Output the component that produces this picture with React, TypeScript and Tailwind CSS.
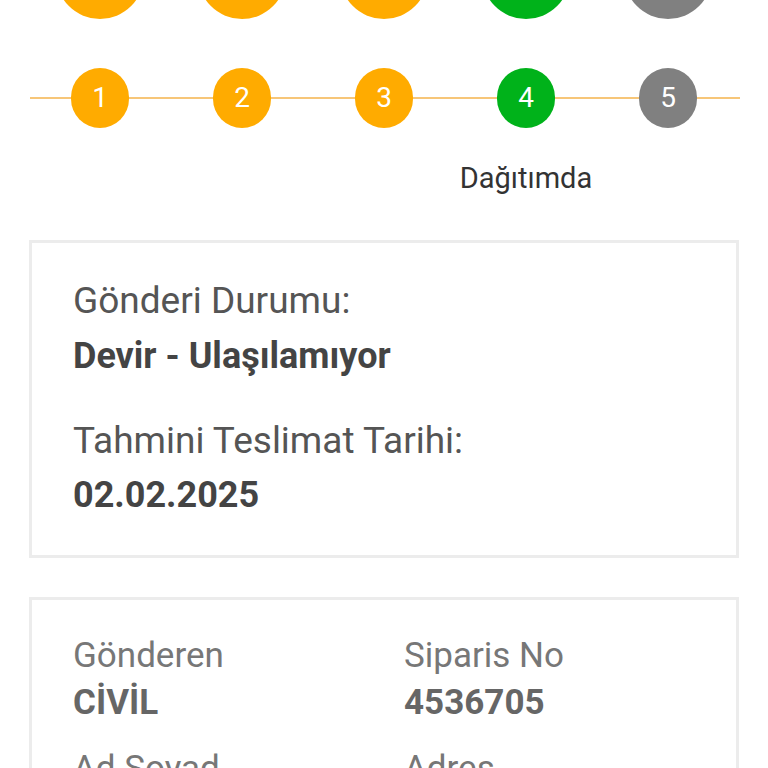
import React from "react";

const steps = [
  { n: "1", c: "bg-[#ffab00]" },
  { n: "2", c: "bg-[#ffab00]" },
  { n: "3", c: "bg-[#ffab00]" },
  { n: "4", c: "bg-[#00b21a]" },
  { n: "5", c: "bg-[#808080]" },
];

export default function App() {
  return (
    <div className="w-[768px] h-[768px] overflow-hidden bg-white" style={{ fontFamily: "Roboto, 'Noto Sans', sans-serif" }}>
      {/* top partially visible circles */}
      <div className="flex pl-[29px] mt-[-69px]">
        {steps.map((s) => (
          <div key={"t" + s.n} className="w-[142px] flex justify-center">
            <div className={`w-[88px] h-[88px] rounded-full ${s.c}`} />
          </div>
        ))}
      </div>
      {/* stepper */}
      <div className="relative ml-[30px] w-[710px] mt-[49px] h-[60px]">
        <div className="absolute left-0 right-0 top-[29px] h-[2px] bg-[#f7c678]" />
        <div className="relative flex ml-[-1px]">
          {steps.map((s) => (
            <div key={s.n} className="w-[142px] flex justify-center">
              <div className={`w-[58px] h-[60px] rounded-full ${s.c} flex items-center justify-center text-white text-[28px]`}>
                {s.n}
              </div>
            </div>
          ))}
        </div>
      </div>
      <div className="flex pl-[29px] mt-[32px]">
        <div className="w-[426px]" />
        <div className="w-[142px] flex justify-center whitespace-nowrap text-[29px] leading-[36px] text-[#333]">Dağıtımda</div>
      </div>
      {/* card 1 */}
      <div className="mx-[29px] mt-[44px] border-[3px] border-[#ececec] pl-[41px] pt-[36px] pb-[38px]">
        <div className="text-[37px] leading-[44px] text-[#555]">Gönderi Durumu:</div>
        <div className="mt-[11px] text-[36px] leading-[44px] font-bold text-[#444]">Devir - Ulaşılamıyor</div>
        <div className="mt-[41px] text-[37px] leading-[44px] text-[#555]">Tahmini Teslimat Tarihi:</div>
        <div className="mt-[10px] text-[36px] leading-[44px] font-bold text-[#444]">02.02.2025</div>
      </div>
      {/* card 2 */}
      <div className="mx-[29px] mt-[39px] border-[3px] border-[#ececec] pl-[41px] pt-[34px] pb-[37px]">
        <div className="grid grid-cols-[331px_1fr]">
          <div>
            <div className="text-[35px] leading-[44px] text-[#777]">Gönderen</div>
            <div className="mt-[3px] text-[35px] leading-[44px] font-bold text-[#666]">CİVİL</div>
          </div>
          <div>
            <div className="text-[35px] leading-[44px] text-[#777]">Siparis No</div>
            <div className="mt-[3px] text-[35px] leading-[44px] font-bold text-[#666]">4536705</div>
          </div>
          <div className="mt-[22px]">
            <div className="text-[35px] leading-[44px] text-[#777]">Ad Soyad</div>
          </div>
          <div className="mt-[22px]">
            <div className="text-[35px] leading-[44px] text-[#777]">Adres</div>
          </div>
        </div>
      </div>
    </div>
  );
}
